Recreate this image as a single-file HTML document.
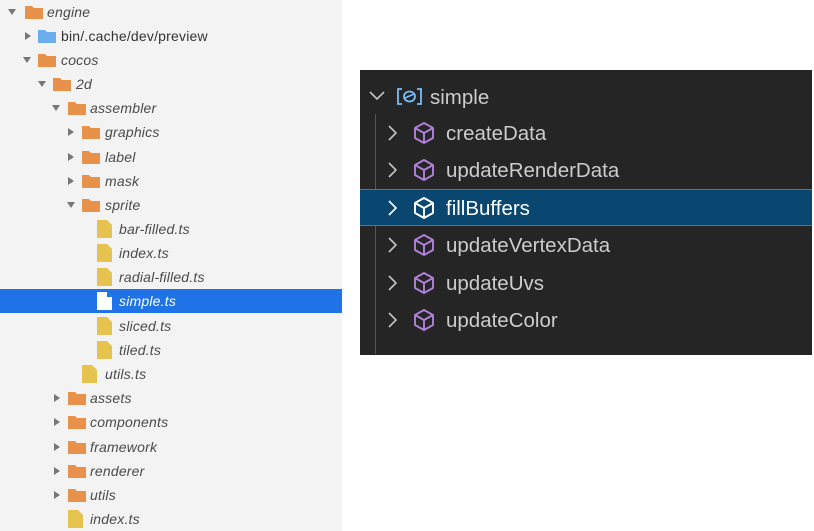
<!DOCTYPE html>
<html><head><meta charset="utf-8"><style>
*{margin:0;padding:0;box-sizing:border-box}
body{width:814px;height:531px;background:#fff;position:relative;overflow:hidden;font-family:"Liberation Sans",sans-serif}
#left{position:absolute;left:0;top:0;width:342px;height:531px;background:#f3f3f3}
.r{position:absolute;left:0;width:342px;height:24px}
.r.sel{background:#1f73e6}
.r span{position:absolute;top:4px;font-style:italic;font-size:14px;color:#4a4a4a;letter-spacing:.2px}
.r.sel span{color:#fff}
.tri{position:absolute;top:9px;width:0;height:0}
.tri.d{border-left:4px solid transparent;border-right:4px solid transparent;border-top:6px solid #777}
.tri.rt{border-top:4px solid transparent;border-bottom:4px solid transparent;border-left:6px solid #777;top:8px}
.fo{position:absolute;top:5px}
.fi{position:absolute;top:3px}
#right{position:absolute;left:360px;top:70px;width:452px;height:285px;background:#252526}
.rr{position:absolute;left:0;width:452px;height:37px}
.rr.sel{background:#094771;border-top:1px solid #1a85d0;border-bottom:1px solid #1a85d0}
.rr span{position:absolute;top:7px;font-size:20.5px;color:#cccccc}
.rr.sel span{color:#fff}
</style></head><body>
<div id="left">
<div class="r" style="top:0"><i class="tri d" style="left:8px"></i><svg class="fo" style="left:25px" width="18" height="14"><path d="M0 1h7l2 2h9v11H0z" fill="#e8914a"/></svg><span style="left:47px">engine</span></div>
<div class="r" style="top:24px"><i class="tri rt" style="left:25px"></i><svg class="fo" style="left:38px" width="18" height="14"><path d="M0 1h7l2 2h9v11H0z" fill="#6aaef0"/></svg><span style="left:61px;font-style:normal;color:#333">bin/.cache/dev/preview</span></div>
<div class="r" style="top:48px"><i class="tri d" style="left:23px"></i><svg class="fo" style="left:38px" width="18" height="14"><path d="M0 1h7l2 2h9v11H0z" fill="#e8914a"/></svg><span style="left:61px">cocos</span></div>
<div class="r" style="top:72px"><i class="tri d" style="left:38px"></i><svg class="fo" style="left:53px" width="18" height="14"><path d="M0 1h7l2 2h9v11H0z" fill="#e8914a"/></svg><span style="left:76px">2d</span></div>
<div class="r" style="top:96px"><i class="tri d" style="left:52px"></i><svg class="fo" style="left:68px" width="18" height="14"><path d="M0 1h7l2 2h9v11H0z" fill="#e8914a"/></svg><span style="left:90px">assembler</span></div>
<div class="r" style="top:120px"><i class="tri rt" style="left:68px"></i><svg class="fo" style="left:82px" width="18" height="14"><path d="M0 1h7l2 2h9v11H0z" fill="#e8914a"/></svg><span style="left:105px">graphics</span></div>
<div class="r" style="top:145px"><i class="tri rt" style="left:68px"></i><svg class="fo" style="left:82px" width="18" height="14"><path d="M0 1h7l2 2h9v11H0z" fill="#e8914a"/></svg><span style="left:105px">label</span></div>
<div class="r" style="top:169px"><i class="tri rt" style="left:68px"></i><svg class="fo" style="left:82px" width="18" height="14"><path d="M0 1h7l2 2h9v11H0z" fill="#e8914a"/></svg><span style="left:105px">mask</span></div>
<div class="r" style="top:193px"><i class="tri d" style="left:67px"></i><svg class="fo" style="left:82px" width="18" height="14"><path d="M0 1h7l2 2h9v11H0z" fill="#e8914a"/></svg><span style="left:105px">sprite</span></div>
<div class="r" style="top:217px"><svg class="fi" style="left:97px" width="15" height="18"><path d="M0 0h10l5 5v13H0z" fill="#e6c24e"/></svg><span style="left:119px">bar-filled.ts</span></div>
<div class="r" style="top:241px"><svg class="fi" style="left:97px" width="15" height="18"><path d="M0 0h10l5 5v13H0z" fill="#e6c24e"/></svg><span style="left:119px">index.ts</span></div>
<div class="r" style="top:265px"><svg class="fi" style="left:97px" width="15" height="18"><path d="M0 0h10l5 5v13H0z" fill="#e6c24e"/></svg><span style="left:119px">radial-filled.ts</span></div>
<div class="r sel" style="top:289px"><svg class="fi" style="left:97px" width="15" height="18"><path d="M0 0h10l5 5v13H0z" fill="#fff"/><path d="M10 0v5h5z" fill="#1f73e6"/></svg><span style="left:119px">simple.ts</span></div>
<div class="r" style="top:314px"><svg class="fi" style="left:97px" width="15" height="18"><path d="M0 0h10l5 5v13H0z" fill="#e6c24e"/></svg><span style="left:119px">sliced.ts</span></div>
<div class="r" style="top:338px"><svg class="fi" style="left:97px" width="15" height="18"><path d="M0 0h10l5 5v13H0z" fill="#e6c24e"/></svg><span style="left:119px">tiled.ts</span></div>
<div class="r" style="top:362px"><svg class="fi" style="left:82px" width="15" height="18"><path d="M0 0h10l5 5v13H0z" fill="#e6c24e"/></svg><span style="left:105px">utils.ts</span></div>
<div class="r" style="top:386px"><i class="tri rt" style="left:54px"></i><svg class="fo" style="left:68px" width="18" height="14"><path d="M0 1h7l2 2h9v11H0z" fill="#e8914a"/></svg><span style="left:90px">assets</span></div>
<div class="r" style="top:410px"><i class="tri rt" style="left:54px"></i><svg class="fo" style="left:68px" width="18" height="14"><path d="M0 1h7l2 2h9v11H0z" fill="#e8914a"/></svg><span style="left:90px">components</span></div>
<div class="r" style="top:435px"><i class="tri rt" style="left:54px"></i><svg class="fo" style="left:68px" width="18" height="14"><path d="M0 1h7l2 2h9v11H0z" fill="#e8914a"/></svg><span style="left:90px">framework</span></div>
<div class="r" style="top:459px"><i class="tri rt" style="left:54px"></i><svg class="fo" style="left:68px" width="18" height="14"><path d="M0 1h7l2 2h9v11H0z" fill="#e8914a"/></svg><span style="left:90px">renderer</span></div>
<div class="r" style="top:483px"><i class="tri rt" style="left:54px"></i><svg class="fo" style="left:68px" width="18" height="14"><path d="M0 1h7l2 2h9v11H0z" fill="#e8914a"/></svg><span style="left:90px">utils</span></div>
<div class="r" style="top:507px"><svg class="fi" style="left:68px" width="15" height="18"><path d="M0 0h10l5 5v13H0z" fill="#e6c24e"/></svg><span style="left:90px">index.ts</span></div>
</div>
<div id="right">
<div style="position:absolute;left:15px;top:44px;width:1px;height:240px;background:#585858"></div>
<div class="rr" style="top:8px"><svg style="position:absolute;left:9px;top:13px" width="16" height="10"><path d="M1 1l7 7 7-7" stroke="#c5c5c5" stroke-width="1.6" fill="none"/></svg>
<svg style="position:absolute;left:37px;top:10px" width="25" height="17"><path d="M5 1H1v15h4M20 1h4v15h-4" stroke="#75beff" stroke-width="1.8" fill="none"/><ellipse cx="12.5" cy="8.5" rx="5.5" ry="5" fill="none" stroke="#75beff" stroke-width="1.8"/><path d="M8 10l9-4" stroke="#75beff" stroke-width="1.6"/></svg>
<span style="left:70px;top:8px">simple</span></div>
</div>
<script>
const items=["createData","updateRenderData","fillBuffers","updateVertexData","updateUvs","updateColor"];
const R=document.getElementById('right');
items.forEach((t,i)=>{const top=44+i*37.4;const sel=i==2;const c=sel?"#ffffff":"#b180d7";
const d=document.createElement('div');d.className='rr'+(sel?' sel':'');d.style.top=top+'px';
d.innerHTML=`<svg style="position:absolute;left:27px;top:${sel?10:11}px" width="10" height="16"><path d="M2 1l7 7-7 7" stroke="${sel?'#fff':'#c5c5c5'}" stroke-width="1.6" fill="none"/></svg>
<svg style="position:absolute;left:52px;top:${sel?6:7}px" width="24" height="24"><path d="M12 2l9 5v10l-9 5-9-5V7z M3 7l9 5 9-5 M12 12v10" stroke="${c}" stroke-width="1.9" fill="none" stroke-linejoin="round"/></svg>
<span style="left:86px;top:${sel?7:8}px">${t}</span>`;R.appendChild(d);});
</script>
</body></html>
